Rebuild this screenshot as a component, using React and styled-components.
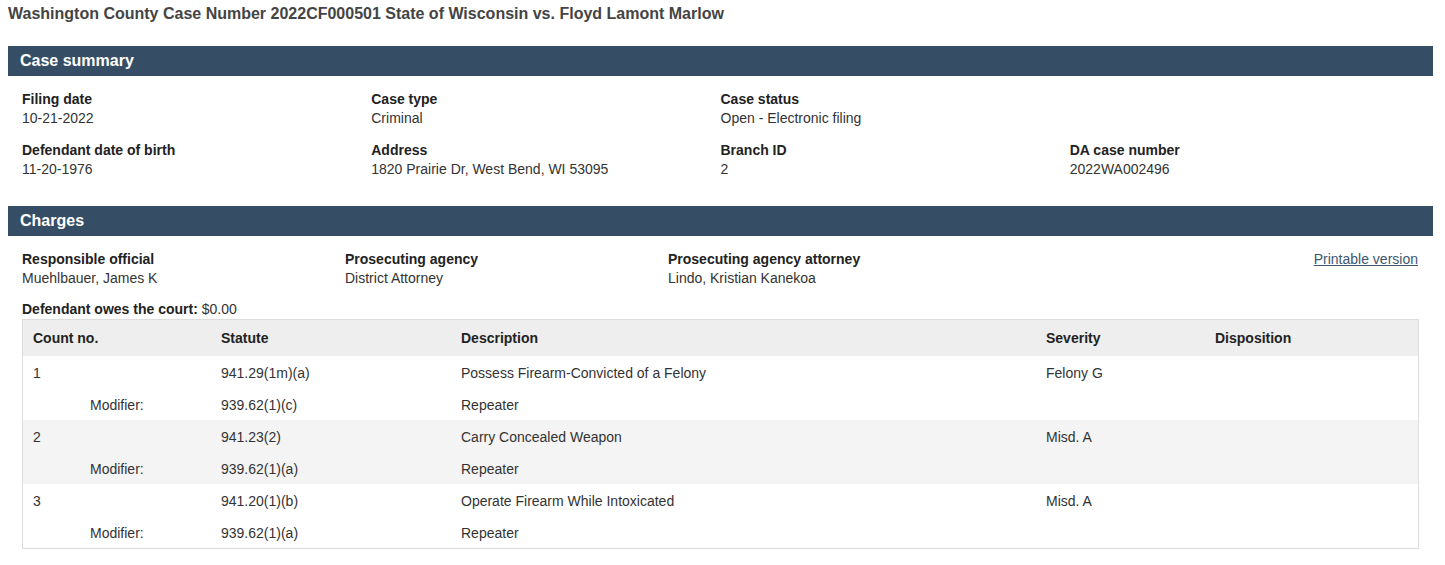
import React from 'react';
import styled, { createGlobalStyle } from 'styled-components';

const GlobalStyle = createGlobalStyle`
  body {
    margin: 0;
    background: #fff;
    font-family: "Liberation Sans", Arial, sans-serif;
    color: #333;
  }
`;

const Page = styled.div`
  padding: 4px 12px 16px 8px;
`;

const Title = styled.h1`
  margin: 0 0 22px;
  font-size: 16px;
  line-height: 20px;
  font-weight: bold;
  color: #444;
`;

const SectionBar = styled.h2`
  margin: 0;
  height: 30px;
  padding: 0 12px;
  display: flex;
  align-items: center;
  background: #354e65;
  color: #fff;
  font-size: 16px;
  font-weight: bold;
`;

const SectionBody = styled.div`
  padding: ${(p) => p.pad || '14px 14px 27px'};
`;

const FieldGrid = styled.div`
  display: grid;
  grid-template-columns: ${(p) => p.cols};
  row-gap: 13px;
  font-size: 14px;
  line-height: 19px;
`;

const Field = styled.div`
  display: flex;
  flex-direction: column;
`;

const Label = styled.span`
  font-weight: bold;
  color: #222;
`;

const Value = styled.span`
  color: #333;
`;

const LinkCell = styled.div`
  display: flex;
  justify-content: flex-end;
  align-items: flex-start;
  padding-right: 1px;
`;

const PrintLink = styled.a`
  color: #3d5670;
  text-decoration: underline;
  font-size: 14px;
  line-height: 19px;
  cursor: pointer;
`;

const Owes = styled.div`
  margin-top: 12px;
  font-size: 14px;
  line-height: 19px;
`;

const Table = styled.table`
  width: 100%;
  border-collapse: collapse;
  border: 1px solid #ddd;
  font-size: 14px;
  table-layout: fixed;
`;

const Th = styled.th`
  background: #eee;
  text-align: left;
  font-weight: bold;
  color: #222;
  height: 35px;
  padding: 0 10px 1px;
  width: ${(p) => p.w};
`;

const Row = styled.tr`
  background: ${(p) => (p.shade ? '#f4f4f4' : '#fff')};
`;

const Td = styled.td`
  height: 31px;
  padding: 1px 10px 0;
  color: #333;
  vertical-align: middle;
  padding-left: ${(p) => (p.indent ? '67px' : '10px')};
`;

const summary = [
  ['Filing date', '10-21-2022'],
  ['Case type', 'Criminal'],
  ['Case status', 'Open - Electronic filing'],
  null,
  ['Defendant date of birth', '11-20-1976'],
  ['Address', '1820 Prairie Dr, West Bend, WI 53095'],
  ['Branch ID', '2'],
  ['DA case number', '2022WA002496'],
];

const charges = [
  { no: '1', statute: '941.29(1m)(a)', desc: 'Possess Firearm-Convicted of a Felony', sev: 'Felony G', mod: '939.62(1)(c)' },
  { no: '2', statute: '941.23(2)', desc: 'Carry Concealed Weapon', sev: 'Misd. A', mod: '939.62(1)(a)' },
  { no: '3', statute: '941.20(1)(b)', desc: 'Operate Firearm While Intoxicated', sev: 'Misd. A', mod: '939.62(1)(a)' },
];

export default function App() {
  return (
    <>
      <GlobalStyle />
      <Page>
        <Title>Washington County Case Number 2022CF000501 State of Wisconsin vs. Floyd Lamont Marlow</Title>

        <SectionBar>Case summary</SectionBar>
        <SectionBody>
          <FieldGrid cols="repeat(4, 1fr)">
            {summary.map((f, i) =>
              f ? (
                <Field key={i}>
                  <Label>{f[0]}</Label>
                  <Value>{f[1]}</Value>
                </Field>
              ) : (
                <div key={i} />
              )
            )}
          </FieldGrid>
        </SectionBody>

        <SectionBar>Charges</SectionBar>
        <SectionBody pad="14px 14px 0">
          <FieldGrid cols="323px 323px 323px 1fr">
            <Field>
              <Label>Responsible official</Label>
              <Value>Muehlbauer, James K</Value>
            </Field>
            <Field>
              <Label>Prosecuting agency</Label>
              <Value>District Attorney</Value>
            </Field>
            <Field>
              <Label>Prosecuting agency attorney</Label>
              <Value>Lindo, Kristian Kanekoa</Value>
            </Field>
            <LinkCell>
              <PrintLink>Printable version</PrintLink>
            </LinkCell>
          </FieldGrid>
          <Owes>
            <Label>Defendant owes the court:</Label> <Value>$0.00</Value>
          </Owes>
          <Table>
            <thead>
              <tr>
                <Th w="168px">Count no.</Th>
                <Th w="220px">Statute</Th>
                <Th w="565px">Description</Th>
                <Th w="149px">Severity</Th>
                <Th>Disposition</Th>
              </tr>
            </thead>
            <tbody>
              {charges.map((c, i) => (
                <React.Fragment key={c.no}>
                  <Row shade={i % 2 === 1}>
                    <Td>{c.no}</Td>
                    <Td>{c.statute}</Td>
                    <Td>{c.desc}</Td>
                    <Td>{c.sev}</Td>
                    <Td />
                  </Row>
                  <Row shade={i % 2 === 1}>
                    <Td indent>Modifier:</Td>
                    <Td>{c.mod}</Td>
                    <Td>Repeater</Td>
                    <Td />
                    <Td />
                  </Row>
                </React.Fragment>
              ))}
            </tbody>
          </Table>
        </SectionBody>
      </Page>
    </>
  );
}
